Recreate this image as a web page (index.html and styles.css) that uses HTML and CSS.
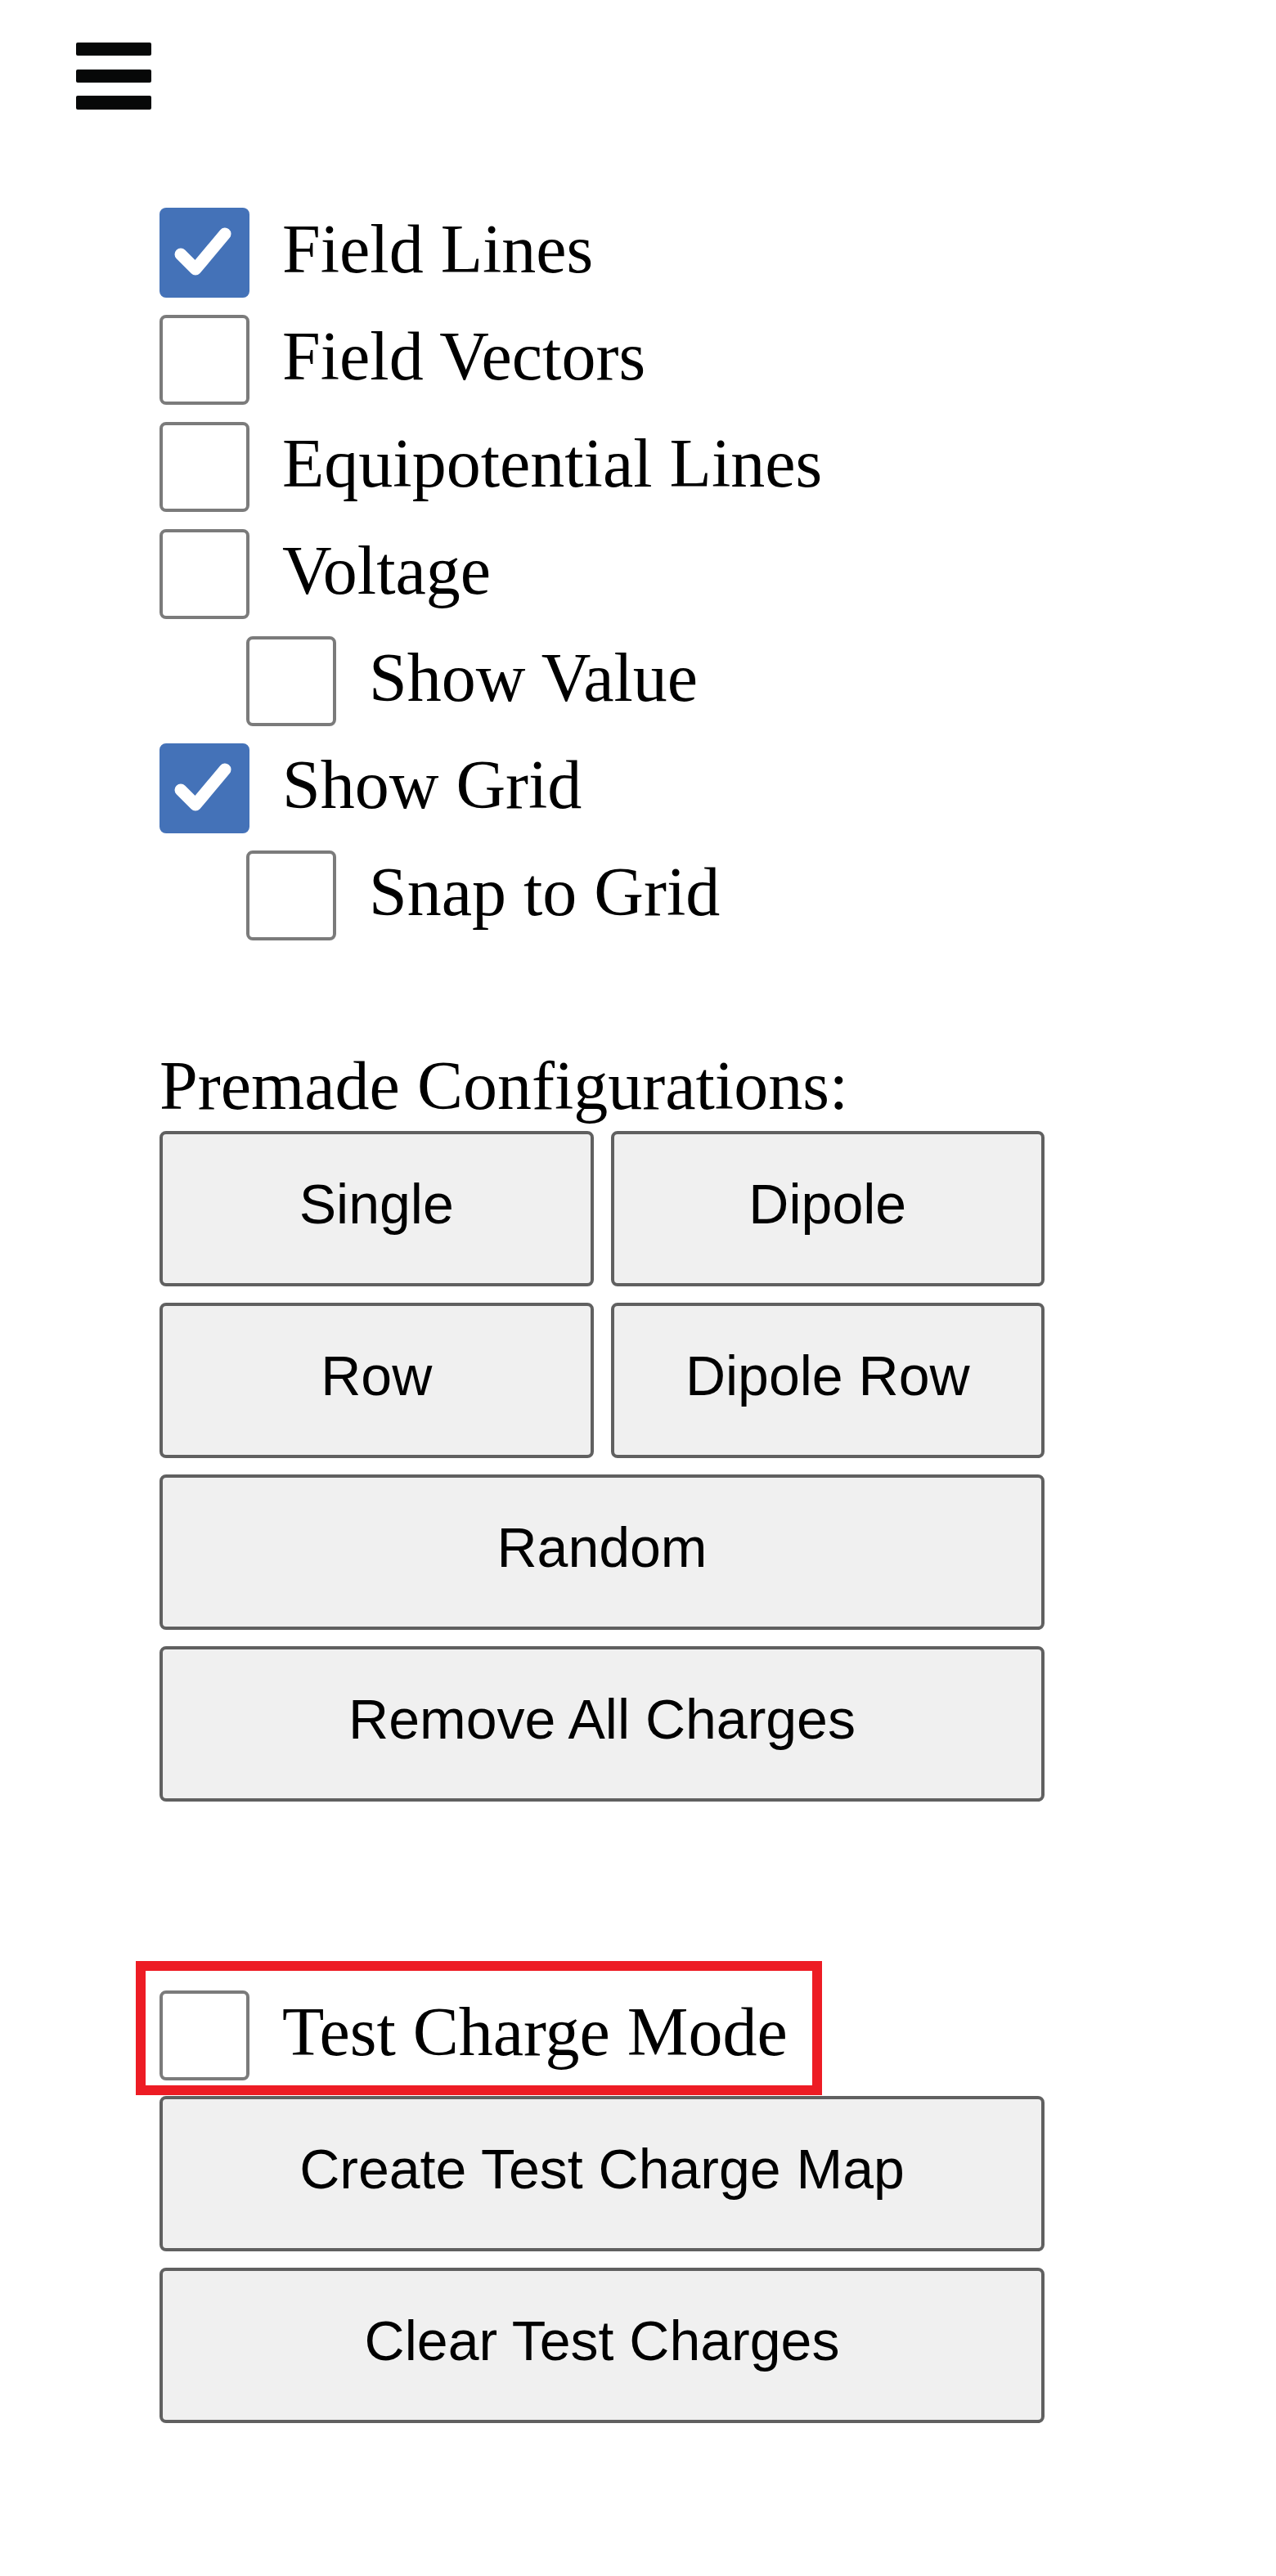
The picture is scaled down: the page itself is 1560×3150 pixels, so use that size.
FILE: index.html
```html
<!DOCTYPE html>
<html lang="en">
<head>
<meta charset="utf-8">
<title>Electric Field Controls</title>
<link rel="stylesheet" href="styles.css">
</head>
<body>
<header class="topbar">
  <button class="menu" aria-label="Menu"><span></span><span></span><span></span></button>
</header>
<main class="panel">
  <div class="options">
    <label class="opt"><span class="box checked"><svg viewBox="0 0 110 110"><path d="M26 57 L44 75 L80 32"/></svg></span><span class="txt">Field Lines</span></label>
    <label class="opt"><span class="box"></span><span class="txt">Field Vectors</span></label>
    <label class="opt"><span class="box"></span><span class="txt">Equipotential Lines</span></label>
    <label class="opt"><span class="box"></span><span class="txt">Voltage</span></label>
    <label class="opt sub"><span class="box"></span><span class="txt">Show Value</span></label>
    <label class="opt"><span class="box checked"><svg viewBox="0 0 110 110"><path d="M26 57 L44 75 L80 32"/></svg></span><span class="txt">Show Grid</span></label>
    <label class="opt sub"><span class="box"></span><span class="txt">Snap to Grid</span></label>
  </div>

  <section class="premade">
    <div class="heading">Premade Configurations:</div>
    <div class="grid">
      <button class="btn">Single</button>
      <button class="btn">Dipole</button>
      <button class="btn">Row</button>
      <button class="btn">Dipole Row</button>
      <button class="btn wide">Random</button>
      <button class="btn wide">Remove All Charges</button>
    </div>
  </section>

  <section class="test">
    <div class="annotated">
      <label class="opt"><span class="box"></span><span class="txt">Test Charge Mode</span></label>
      <div class="mark"></div>
    </div>
    <div class="grid">
      <button class="btn wide">Create Test Charge Map</button>
      <button class="btn wide">Clear Test Charges</button>
    </div>
  </section>
</main>
</body>
</html>
```

FILE: styles.css
```css
* { box-sizing: border-box; }

body {
  margin: 0;
  background: #ffffff;
  color: #000000;
  font-family: "Liberation Serif", "Times New Roman", serif;
}

.topbar {
  padding: 52px 0 0 93px;
}

.menu {
  display: flex;
  flex-direction: column;
  width: 92px;
  padding: 0;
  margin: 0;
  border: 0;
  background: none;
}

.menu span {
  display: block;
  height: 16px;
  background: #070808;
  border-radius: 2px;
}

.menu span:nth-child(2) { margin-top: 17px; }
.menu span:nth-child(3) { margin-top: 16px; height: 17px; }

.panel {
  padding-left: 195px;
  width: 1277px;
}

.options {
  display: flex;
  flex-direction: column;
  gap: 21px;
  margin-top: 120px;
}

.opt {
  display: flex;
  align-items: center;
  gap: 40px;
  height: 110px;
  font-size: 84px;
  line-height: 93px;
  white-space: nowrap;
}

.opt .txt {
  margin-bottom: 9px;
}

.opt.sub {
  padding-left: 106px;
}

.box {
  flex: none;
  width: 110px;
  height: 110px;
  border: 4px solid #7b7b7b;
  border-radius: 8px;
  background: #ffffff;
}

.box.checked {
  background: #4472b8;
  border-color: #4472b8;
}

.box svg {
  display: block;
  width: 110px;
  height: 110px;
  margin: -4px;
}

.box svg path {
  fill: none;
  stroke: #ffffff;
  stroke-width: 15;
  stroke-linecap: round;
  stroke-linejoin: round;
}

.premade {
  margin-top: 131px;
}

.heading {
  font-size: 84px;
  line-height: 93px;
  margin-bottom: 9px;
}

.grid {
  display: grid;
  grid-template-columns: 1fr 1fr;
  column-gap: 21px;
  row-gap: 20px;
  width: 1082px;
}

.btn {
  height: 190px;
  margin: 0;
  padding: 0 0 12px;
  font-family: "Liberation Sans", Arial, sans-serif;
  font-size: 68px;
  color: #000000;
  background: #f0f0f0;
  border: 4px solid #606060;
  border-radius: 8px;
}

.btn.wide {
  grid-column: 1 / span 2;
}

.test {
  margin-top: 231px;
}

.annotated {
  position: relative;
  width: fit-content;
  margin-bottom: 19px;
}

.mark {
  position: absolute;
  left: -29px;
  top: -36px;
  width: 839px;
  height: 164px;
  border: 12px solid #ed1c24;
  pointer-events: none;
}
```
